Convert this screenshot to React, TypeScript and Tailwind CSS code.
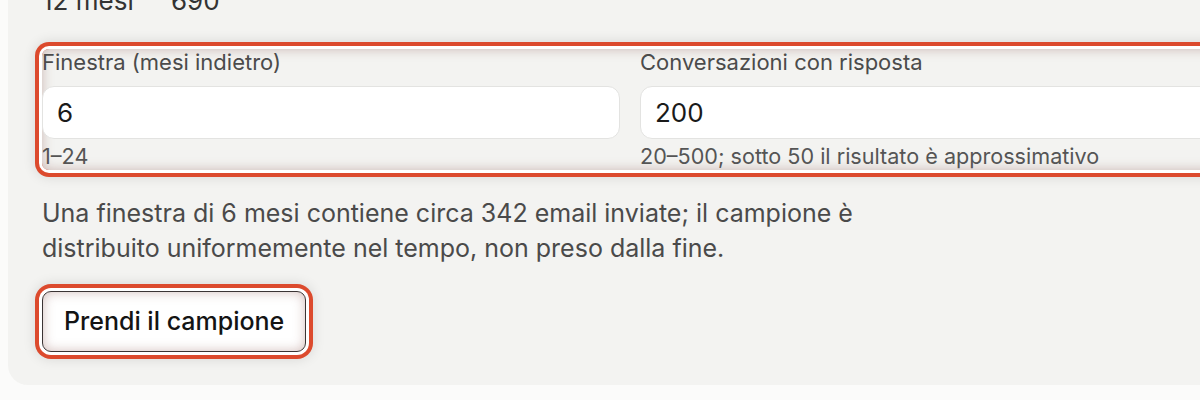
import React from "react"

/* Highlight ring drawn around the annotated elements */
const HILITE =
  "shadow-[0_0_0_3px_#ffffff,0_0_0_7px_#dc4a2d,0_0_12px_8px_rgba(0,0,0,0.10),inset_0_0_12px_rgba(130,70,60,0.35)]"

function Field({ label, value, hint }: { label: string; value: string; hint: string }) {
  return (
    <div className="flex flex-col">
      <label className="text-[22px] leading-[27px] text-[#4b4b4b]">{label}</label>
      <input
        readOnly
        value={value}
        className="mt-[10px] h-[53px] w-full rounded-[12px] border border-[#e3e3e1] bg-white px-[14px] text-[26px] text-[#1a1a1a] outline-none"
      />
      <span className="mt-[4px] text-[21.6px] leading-[26px] text-[#555555]">{hint}</span>
    </div>
  )
}

export default function App() {
  return (
    <div
      className="h-[400px] w-full overflow-hidden bg-[#fbfbfa] pl-[8px]"
      style={{ fontFamily: "Inter, 'Noto Sans', sans-serif" }}
    >
      <div className="-mt-[24px] w-[1244px] rounded-b-[20px] bg-[#f3f3f1] px-[34px] pb-[33px]">
        {/* tail of the table above */}
        <div className="flex h-[40px] items-end text-[26px] leading-[30px] text-[#333333]">
          <span className="w-[129px]">12 mesi</span>
          <span>690</span>
        </div>

        <div className={`mt-[33px] grid grid-cols-2 gap-x-[20px] rounded-[7px] pb-[1px] ${HILITE}`}>
          <Field label="Finestra (mesi indietro)" value="6" hint="1–24" />
          <Field
            label="Conversazioni con risposta"
            value="200"
            hint="20–500; sotto 50 il risultato è approssimativo"
          />
        </div>

        <p className="mt-[26px] max-w-[850px] text-[25px] leading-[35px] text-[#4a4a4a]">
          Una finestra di 6 mesi contiene circa 342 email inviate; il campione è distribuito
          uniformemente nel tempo, non preso dalla fine.
        </p>

        <button
          className={`mt-[25px] h-[61px] rounded-[9px] border border-[#3b3434] bg-white px-[21px] text-[25px] font-medium text-[#141414] ${HILITE}`}
        >
          Prendi il campione
        </button>
      </div>
    </div>
  )
}
